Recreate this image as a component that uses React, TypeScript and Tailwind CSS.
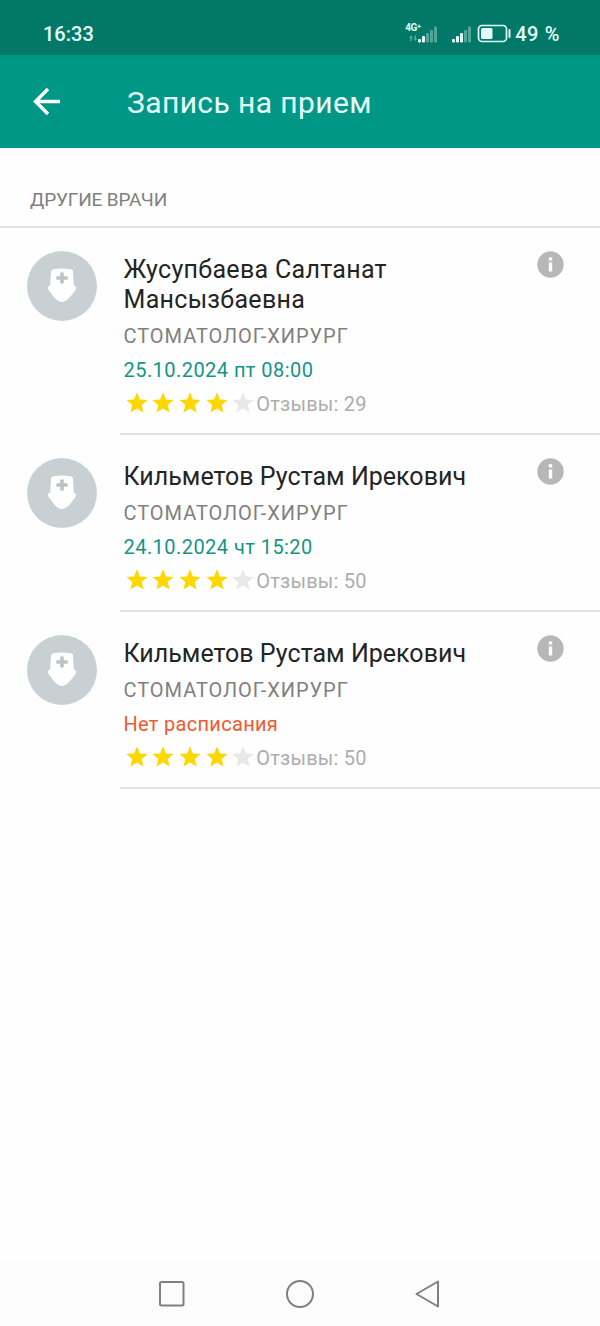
type Doctor = {
  name: string;
  nameStyle: string;
  speciality: string;
  slot: string;
  hasSlot: boolean;
  rating: number;
  reviews: number;
};

const doctors: Doctor[] = [
  {
    name: "Жусупбаева Салтанат Мансызбаевна",
    nameStyle: "w-[300px] tracking-[0.3px]",
    speciality: "СТОМАТОЛОГ-ХИРУРГ",
    slot: "25.10.2024 пт 08:00",
    hasSlot: true,
    rating: 4,
    reviews: 29,
  },
  {
    name: "Кильметов Рустам Ирекович",
    nameStyle: "w-[400px] tracking-[0.02px]",
    speciality: "СТОМАТОЛОГ-ХИРУРГ",
    slot: "24.10.2024 чт 15:20",
    hasSlot: true,
    rating: 4,
    reviews: 50,
  },
  {
    name: "Кильметов Рустам Ирекович",
    nameStyle: "w-[400px] tracking-[0.02px]",
    speciality: "СТОМАТОЛОГ-ХИРУРГ",
    slot: "Нет расписания",
    hasSlot: false,
    rating: 4,
    reviews: 50,
  },
];

const StatusBar = () => (
  <div className="flex h-[55px] items-center bg-[#027868] pt-[13px] pr-[40px] pl-[43px] text-[#e4fffa]">
    <span className="text-[20px] leading-none font-medium">16:33</span>
    <div className="ml-auto flex items-center">
      <div className="flex h-[20px] w-[32px] flex-col">
        <span className="-mt-px h-[10px] text-[10px] leading-[10px] font-bold tracking-[-0.3px] whitespace-nowrap">4G⁺</span>
        <svg className="-mt-[9px] h-[20px] w-[32px]" viewBox="0 0 32 20" fill="currentColor">
          <path opacity=".4" d="M4 14l2-2.500 2 2.500H6.700V17H5.300v-3zM8.500 14.500h1.200V11.500h1.300v3h1.200L10.300 17z" />
          <rect x="13" y="15" width="3" height="3.500" rx="1" />
          <rect x="17" y="12" width="3" height="6.500" rx="1" />
          <g opacity=".35">
            <rect x="21" y="9" width="3" height="9.500" rx="1" />
            <rect x="25" y="6" width="3" height="12.500" rx="1" />
            <rect x="29" y="2.500" width="3" height="16" rx="1" />
          </g>
        </svg>
      </div>
      <svg className="ml-[15px] h-[20px] w-[19px]" viewBox="0 0 19 20" fill="currentColor">
        <rect x="0" y="15" width="3" height="3.500" rx="1" />
        <rect x="4" y="12" width="3" height="6.500" rx="1" />
        <rect x="8" y="9" width="3" height="9.500" rx="1" />
        <g opacity=".35">
          <rect x="12" y="6" width="3" height="12.500" rx="1" />
          <rect x="16" y="2.500" width="3" height="16" rx="1" />
        </g>
      </svg>
      <svg className="ml-[6px] h-[20px] w-[34px]" viewBox="0 0 34 20" fill="currentColor">
        <rect x="1.500" y="1.500" width="28" height="16" rx="3.500" fill="none" stroke="currentColor" strokeWidth="1.700" />
        <rect x="4" y="4" width="11.500" height="11" rx="1.500" />
        <rect x="31.500" y="5" width="2" height="9" rx="1" />
      </svg>
      <span className="ml-[4px] text-[20px] leading-none font-medium tracking-[0.600px]">49 %</span>
    </div>
  </div>
);

const AppBar = () => (
  <header className="flex h-[93px] items-center bg-[#009787] pl-[33px] text-[#e9fffc]">
    <svg className="h-[28px] w-[28px]" viewBox="0 0 28 28" fill="none" stroke="#fff" strokeWidth="3.400">
      <path d="M27 13.500H3M15 1L2.500 13.500 15 26" />
    </svg>
    <h1 className="ml-[66px] pt-[3px] text-[30px] leading-none tracking-[0.400px]">Запись на прием</h1>
  </header>
);

const Avatar = () => (
  <svg className="mt-[23px] ml-[27px] h-[70px] w-[70px] shrink-0" viewBox="0 0 70 70">
    <circle cx="35" cy="35" r="35" fill="#c9d0d4" />
    <path
      fill="#fff"
      d="M24 20.500Q24.300 18.600 26.500 18.300Q35 16.900 43.500 18.300Q45.700 18.600 46 20.500L46.800 34.800Q49.400 35.200 49 37.500Q48.600 40 46.500 41.200C44.800 44.500 39.500 51 35 51S25.200 44.500 23.500 41.200Q21.400 40 21 37.500Q20.600 35.200 23.200 34.800Z"
    />
    <path fill="#bec2c4" d="M33.200 21.500h3.600v3.700h3.900v3.600h-3.900v3.700h-3.600v-3.700h-3.900v-3.600h3.900z" />
  </svg>
);

const Rating = ({ value }: { value: number }) => (
  <div className="flex gap-[4.700px] pl-[2px]">
    {[1, 2, 3, 4, 5].map((n) => (
      <svg key={n} className="-mt-[2px] h-[22px] w-[22px]" viewBox="0 0 22 22">
        <path
          className={n <= value ? "fill-[#fdd800]" : "fill-[#e8e8e9]"}
          d="M11 0.300l2.900 7.200 7.700.6-5.900 5 1.900 7.500L11 16.500l-6.600 4.100 1.900-7.500-5.900-5 7.700-.6z"
        />
      </svg>
    ))}
  </div>
);

const DoctorRow = ({ doctor }: { doctor: Doctor }) => (
  <li className="flex">
    <Avatar />
    <div className="ml-[23px] flex flex-1 items-start justify-between border-b-2 border-[#e2e2e2] pt-[26px] pr-[36.500px] pb-[12px] pl-[3.500px]">
      <div>
        <h2 className={`${doctor.nameStyle} pt-px text-[25px] leading-[30px] text-[#242424]`}>{doctor.name}</h2>
        <p className="mt-[4px] text-[20px] leading-[34px] tracking-[0.960px] text-[#808080]">{doctor.speciality}</p>
        <p
          className={`text-[20px] leading-[34px] ${
            doctor.hasSlot ? "tracking-[0.450px] text-[#149584]" : "tracking-[0.300px] text-[#f0592f]"
          }`}
        >
          {doctor.slot}
        </p>
        <div className="flex h-[34px] items-center">
          <Rating value={doctor.rating} />
          <span className="ml-[2px] text-[20px] leading-[34px] tracking-[0.220px] text-[#adadad]">
            Отзывы: {doctor.reviews}
          </span>
        </div>
      </div>
      <svg className="-mt-[3px] h-[27px] w-[27px]" viewBox="0 0 27 27">
        <circle cx="13.500" cy="13.500" r="13.200" fill="#b7b7b7" />
        <path fill="#fff" d="M11.800 6.200h3.400v3.200h-3.400zM11.800 11.500h3.400v9h-3.400z" />
      </svg>
    </div>
  </li>
);

const NavigationBar = () => (
  <nav className="flex h-[65px] items-center justify-center gap-[100px] bg-[#fcfcfc]">
    <svg className="h-[28px] w-[28px]" viewBox="0 0 28 28" fill="none" stroke="#808080" strokeWidth="2">
      <rect x="2" y="2" width="23.500" height="23.500" rx="1.500" />
    </svg>
    <svg className="h-[28px] w-[28px]" viewBox="0 0 28 28" fill="none" stroke="#808080" strokeWidth="2">
      <circle cx="14" cy="14" r="13" />
    </svg>
    <svg className="h-[28px] w-[28px]" viewBox="0 0 28 28" fill="none" stroke="#808080" strokeWidth="2" strokeLinejoin="round">
      <path d="M2.500 14L24 1.500v25z" />
    </svg>
  </nav>
);

const App = () => {
  return (
    <div className="flex h-[1326px] w-[600px] flex-col bg-[#fefefe] font-['Roboto','Noto_Sans',sans-serif]">
      <StatusBar />
      <AppBar />
      <main className="flex-1">
        <div className="flex h-[80px] items-end border-b-2 border-[#e2e2e2] pb-[15px] pl-[30px]">
          <h3 className="text-[19px] leading-[22px] tracking-[-0.150px] text-[#808080]">ДРУГИЕ ВРАЧИ</h3>
        </div>
        <ul>
          {doctors.map((doctor, index) => (
            <DoctorRow key={index} doctor={doctor} />
          ))}
        </ul>
      </main>
      <NavigationBar />
    </div>
  );
};

export default App;
